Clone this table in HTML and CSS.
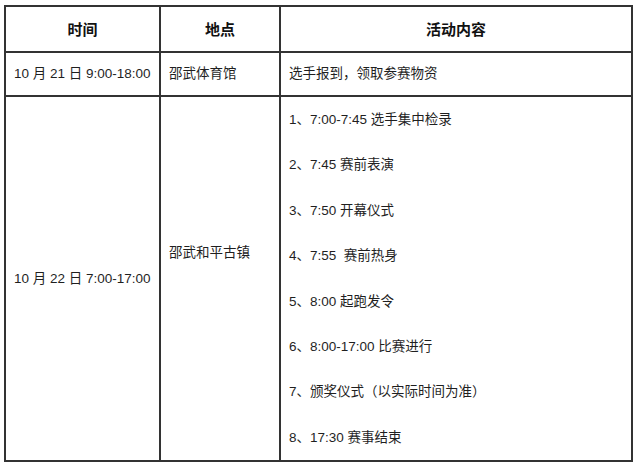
FILE: index.html
```html
<!DOCTYPE html>
<html lang="zh-CN">
<head>
<meta charset="utf-8">
<title>赛程安排</title>
<link rel="stylesheet" href="styles.css">
</head>
<body>
<table class="schedule">
  <colgroup>
    <col class="c-time">
    <col class="c-place">
    <col class="c-act">
  </colgroup>
  <thead>
    <tr class="head-row">
      <th>时间</th>
      <th>地点</th>
      <th>活动内容</th>
    </tr>
  </thead>
  <tbody>
    <tr class="row-one">
      <td>10 月 21 日 9:00-18:00</td>
      <td>邵武体育馆</td>
      <td>选手报到，领取参赛物资</td>
    </tr>
    <tr class="row-two">
      <td>10 月 22 日 7:00-17:00</td>
      <td class="place-raised">邵武和平古镇</td>
      <td class="acts">
        <p>1、7:00-7:45 选手集中检录</p>
        <p>2、7:45 赛前表演</p>
        <p>3、7:50 开幕仪式</p>
        <p>4、7:55&nbsp; 赛前热身</p>
        <p>5、8:00 起跑发令</p>
        <p>6、8:00-17:00 比赛进行</p>
        <p>7、颁奖仪式（以实际时间为准）</p>
        <p>8、17:30 赛事结束</p>
      </td>
    </tr>
  </tbody>
</table>
</body>
</html>
```
FILE: styles.css
```css
html, body {
  margin: 0;
  padding: 0;
  background: #ffffff;
}
body {
  font-family: "Liberation Sans", "Noto Sans CJK SC", sans-serif;
  color: #1f1f1f;
  font-size: 13.5px;
}
.schedule {
  border-collapse: collapse;
  margin: 5px 0 0 4px;
  width: 627px;
  table-layout: fixed;
}
.c-time { width: 155px; }
.c-place { width: 120px; }
.c-act { width: 352px; }
.schedule th,
.schedule td {
  border: 2px solid #333333;
  padding: 0 8px;
  text-align: left;
  vertical-align: middle;
  white-space: nowrap;
  line-height: 18px;
}
.schedule th {
  font-family: "Noto Sans CJK SC", sans-serif;
  font-size: 15px;
  font-weight: 700;
  text-align: center;
  height: 44px;
  color: #111111;
}
.row-one td {
  height: 42px;
}
.place-raised {
  padding-bottom: 52px !important;
}
.acts p {
  margin: 0;
  line-height: 45.4px;
}
```
